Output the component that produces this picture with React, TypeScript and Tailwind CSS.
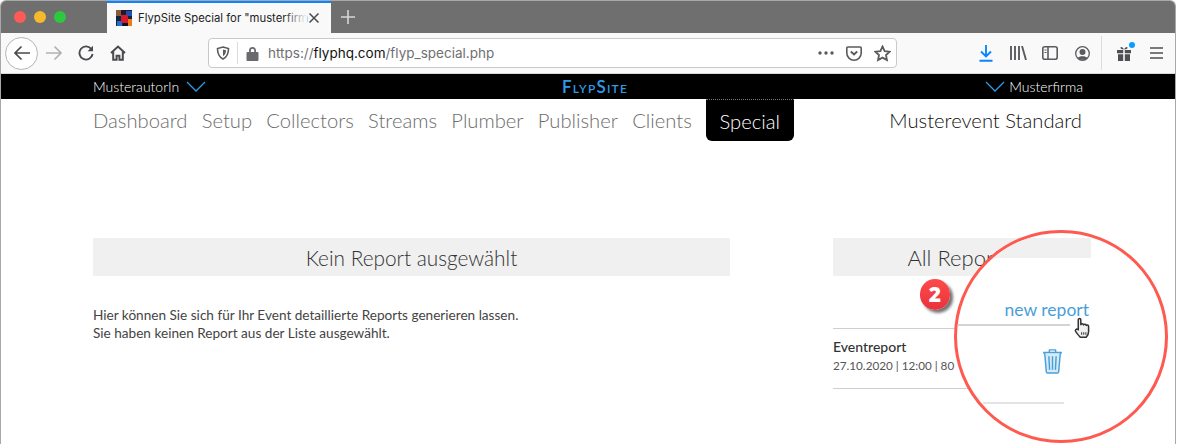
const lato = "font-['Lato','Open_Sans',sans-serif]";

function Favicon() {
  return (
    <svg width="16" height="16" viewBox="0 0 16 16">
      <rect width="16" height="16" fill="#12233f" />
      <rect x="0" y="0" width="5" height="6" fill="#8a5a3a" />
      <rect x="5" y="0" width="5" height="4" fill="#1a1a2a" />
      <rect x="10" y="1" width="6" height="5" fill="#1f4fb0" />
      <rect x="1" y="11" width="5" height="5" fill="#1d6fd0" />
      <rect x="5" y="5" width="7" height="8" fill="#d8182c" />
      <rect x="12" y="9" width="4" height="7" fill="#ee7a1a" />
      <rect x="7" y="13" width="5" height="3" fill="#0c1020" />
    </svg>
  );
}

function IconSlot({ children, w = 32 }: { children: React.ReactNode; w?: number }) {
  return (
    <div className="flex shrink-0 items-center justify-center" style={{ width: w }}>
      {children}
    </div>
  );
}

function Chevron() {
  return (
    <svg width="20" height="11" viewBox="0 0 20 11" fill="none" stroke="#2f9be8" strokeWidth="1.3">
      <path d="M1 1l9 9 9-9" />
    </svg>
  );
}

function TabBar() {
  return (
    <div className="flex h-[32px] bg-[#6f6f6f]">
      <div className="flex w-[106px] items-center gap-[8px] pl-[13px]">
        <span className="h-[12px] w-[12px] rounded-full bg-[#fc5b57]" />
        <span className="h-[12px] w-[12px] rounded-full bg-[#f6b92b]" />
        <span className="h-[12px] w-[12px] rounded-full bg-[#2ec840]" />
      </div>
      <div className="relative flex w-[224px] items-center border-t-2 border-[#0a84ff] bg-[#f9f9fa] pl-[9px]">
        <Favicon />
        <span className="ml-[6px] w-[168px] whitespace-nowrap font-['Inter',sans-serif] text-[11.3px] text-[#222]">
          FlypSite Special for "musterfirm
        </span>
        <div className="absolute left-[176px] top-0 h-full w-[24px] bg-gradient-to-r from-transparent to-[#f9f9fa]" />
        <svg className="ml-[2px]" width="12" height="12" viewBox="0 0 12 12" stroke="#4a4a4f" strokeWidth="1.5">
          <path d="M1.500 1.500l9 9M10.500 1.500l-9 9" />
        </svg>
      </div>
      <div className="ml-[10px] flex items-center">
        <svg width="14" height="14" viewBox="0 0 14 14" stroke="#d6d6d6" strokeWidth="1.6">
          <path d="M7 0v14M0 7h14" />
        </svg>
      </div>
    </div>
  );
}

function Toolbar() {
  return (
    <div className="flex h-[41px] items-center border-b border-[#d8d8d8] bg-[#f9f9fa]">
      <div className="ml-[4px] flex h-[33px] w-[33px] items-center justify-center rounded-full border border-[#b4b4b4] bg-white">
        <svg width="18" height="16" viewBox="0 0 18 16" fill="none" stroke="#4a4a4f" strokeWidth="1.7">
          <path d="M17 8H2M8.500 1.500L2 8l6.500 6.500" />
        </svg>
      </div>
      <IconSlot>
        <svg width="18" height="16" viewBox="0 0 18 16" fill="none" stroke="#b1b1b3" strokeWidth="1.7">
          <path d="M1 8h15M9.500 1.500L16 8l-6.500 6.500" />
        </svg>
      </IconSlot>
      <IconSlot>
        <svg width="16" height="16" viewBox="0 0 16 16" fill="none" stroke="#4a4a4f" strokeWidth="1.9">
          <path d="M13.500 4.200A6.600 6.600 0 1 0 14.600 9" />
          <path d="M15 0.800v5.400H9.600" fill="#4a4a4f" stroke="none" />
        </svg>
      </IconSlot>
      <IconSlot>
        <svg width="16" height="16" viewBox="0 0 16 16" fill="none" stroke="#4a4a4f" strokeWidth="2">
          <path d="M1 8l7-6.500L15 8M3.200 6.500v8.200h3.400v-4h2.800v4h3.400V6.500" />
        </svg>
      </IconSlot>
      <div className="ml-[74px] flex h-[30px] w-[689px] items-center rounded-[4px] border border-[#c9c9c9] bg-white pl-[7px]">
        <svg width="14" height="14" viewBox="0 0 14 14" fill="none" stroke="#5b5b5f" strokeWidth="1.6">
          <path d="M7 1l5.500 1.500c0 5-1.500 8.500-5.500 10.500C3 11 1.500 7.500 1.500 2.500z" />
          <path d="M7 3.500l3 .8c0 2.600-.9 4.600-3 5.900z" fill="#5b5b5f" stroke="none" />
        </svg>
        <div className="ml-[7px] h-[22px] w-px bg-[#dcdcdc]" />
        <svg className="ml-[8px]" width="13" height="15" viewBox="0 0 13 15">
          <path d="M3 6V4.500a3.500 3.500 0 0 1 7 0V6h1.500a1 1 0 0 1 1 1v7a1 1 0 0 1-1 1h-10a1 1 0 0 1-1-1V7a1 1 0 0 1 1-1zm1.800 0h3.400V4.500a1.700 1.700 0 0 0-3.400 0z" fill="#6b6b6f" />
        </svg>
        <span className="ml-[9px] whitespace-nowrap font-['Inter',sans-serif] text-[13.5px] text-[#6f6f73]">
          https://<span className="text-[#111]">flyphq.com</span>/flyp_special.php
        </span>
        <div className="ml-auto flex items-center">
          <IconSlot w={28}>
            <svg width="16" height="4" viewBox="0 0 16 4" fill="#5b5b5f">
              <circle cx="2" cy="2" r="1.700" />
              <circle cx="8" cy="2" r="1.700" />
              <circle cx="14" cy="2" r="1.700" />
            </svg>
          </IconSlot>
          <IconSlot w={28}>
            <svg width="16" height="15" viewBox="0 0 16 15" fill="none" stroke="#5b5b5f" strokeWidth="1.6">
              <path d="M1.800 1h12.400a1 1 0 0 1 1 1v5a7.200 7.200 0 0 1-14.400 0V2a1 1 0 0 1 1-1z" />
              <path d="M4.800 5.500L8 8.500l3.200-3" strokeWidth="1.900" />
            </svg>
          </IconSlot>
          <IconSlot w={28}>
            <svg width="17" height="17" viewBox="0 0 16 16" fill="none" stroke="#5b5b5f" strokeWidth="1.700">
              <path d="M8 1.400l2 4.300 4.700.6-3.400 3.200.9 4.700L8 11.900 3.800 14.200l.9-4.700-3.400-3.200 4.700-.6z" />
            </svg>
          </IconSlot>
        </div>
      </div>
      <div className="ml-[73px] flex items-center">
        <IconSlot>
          <svg width="14" height="17" viewBox="0 0 14 17" fill="none" stroke="#0a84ff" strokeWidth="1.900">
            <path d="M7 0v11M2 6.500L7 11.500l5-5M0.500 15.800h13" />
          </svg>
        </IconSlot>
        <IconSlot>
          <svg width="17" height="14" viewBox="0 0 17 14" fill="none" stroke="#5b5b5f" strokeWidth="1.900">
            <path d="M1 0v14M5 0v14M9 0v14M12 0l4 14" />
          </svg>
        </IconSlot>
        <IconSlot>
          <svg width="16" height="14" viewBox="0 0 16 14" fill="none" stroke="#5b5b5f" strokeWidth="1.600">
            <rect x="0.800" y="0.800" width="14.400" height="12.400" rx="2" />
            <path d="M6 1v12" />
            <path d="M2.500 4h2M2.500 6.500h2" strokeWidth="1.200" />
          </svg>
        </IconSlot>
        <IconSlot>
          <svg width="15" height="15" viewBox="0 0 15 15" fill="none" stroke="#5b5b5f" strokeWidth="1.300">
            <circle cx="7.500" cy="7.500" r="6.800" />
            <circle cx="7.500" cy="6" r="3" fill="#5b5b5f" stroke="none" />
            <path d="M2.800 12c1-2.400 8.400-2.400 9.400 0-2 2.400-7.400 2.400-9.400 0z" fill="#5b5b5f" stroke="none" />
          </svg>
        </IconSlot>
        <div className="ml-[3px] h-[34px] w-px bg-[#dcdcdc]" />
        <div className="ml-[6px]">
          <IconSlot>
            <div className="relative">
              <svg width="14" height="15" viewBox="0 0 14 15" fill="#4f4f53">
                <path d="M0 4h6.200v3.200H0zM7.800 4H14v3.200H7.800zM1 8.200h5.200V15H1zM7.800 8.200H13V15H7.800zM7 3.500C5.500 1 4 0.500 3.500 1.500S5 3.500 7 3.500zM7 3.500c1.500-2.500 3-3 3.500-2S9 3.500 7 3.500z" />
              </svg>
              <span className="absolute -right-[4px] -top-[4px] h-[6px] w-[6px] rounded-full bg-[#0a9dff]" />
            </div>
          </IconSlot>
        </div>
        <IconSlot>
          <svg width="13" height="12" viewBox="0 0 13 12" stroke="#4f4f53" strokeWidth="1.600">
            <path d="M0 1h13M0 6h13M0 11h13" />
          </svg>
        </IconSlot>
      </div>
    </div>
  );
}

function SiteHeader() {
  return (
    <div className="grid h-[25px] grid-cols-3 items-center bg-black pl-[92px] pr-[92px] text-[14px] font-light text-white">
      <div className="flex items-center gap-[7px]">
        <span>MusterautorIn</span>
        <Chevron />
      </div>
      <div className="pl-[14px] text-center text-[17px] font-semibold leading-none tracking-[1.2px] text-[#2f9be8] [font-variant:small-caps]">
        FlypSite
      </div>
      <div className="flex items-center justify-end gap-[4px]">
        <Chevron />
        <span>Musterfirma</span>
      </div>
    </div>
  );
}

const navItems = ['Dashboard', 'Setup', 'Collectors', 'Streams', 'Plumber', 'Publisher', 'Clients'];

function Nav() {
  return (
    <div className="flex h-[42px] items-stretch pl-[92px] pr-[93px] text-[20.2px] font-light">
      <div className="flex items-center gap-[14.3px] pt-[1px] text-[#6c6c6c]">
        {navItems.map(item => (
          <span key={item}>{item}</span>
        ))}
      </div>
      <div className="ml-[14px] flex w-[88px] items-center justify-center rounded-b-[6px] border-t border-dotted border-[#777] bg-black pt-[1px] text-white">
        Special
      </div>
      <div className="ml-auto flex items-center pt-[1px] text-[#111]">Musterevent Standard</div>
    </div>
  );
}

function Hand() {
  return (
    <svg width="21" height="22" viewBox="0 0 24 26" stroke="#333" strokeWidth="1.800" fill="#f0f0f0" strokeLinejoin="round">
      <path d="M7 15V3.200c0-2 3-2 3 0V9c.6-1.400 3-1.200 3.200.4.7-1.300 3-1 3.200.6.8-1 2.800-.6 2.800 1.200V17c0 3-1.400 5.500-2.800 7H9.500c-1.600-1.400-3.200-3.600-5.400-6.600-1.500-2.200.8-4 2.900-2.400z" />
      <path d="M11 18v3M13.500 18v3M16 18v3" strokeWidth="1.200" />
    </svg>
  );
}

function Trash() {
  return (
    <svg width="21" height="26" viewBox="0 0 20 25" fill="none" stroke="#4a9fd8" strokeWidth="1.400" strokeLinejoin="round">
      <path d="M1 4.500h18" strokeWidth="2" />
      <path d="M7 4V1.800h6V4" />
      <path d="M2.500 5l1.600 18.200a1 1 0 0 0 1 .8h9.800a1 1 0 0 0 1-.8L17.500 5" fill="#d6ebf8" />
      <path d="M6.500 8l.7 13M10 8v13M13.500 8l-.7 13" />
    </svg>
  );
}

function Callout() {
  return (
    <div className="absolute left-[953px] top-[229px] h-[213px] w-[214px] overflow-hidden rounded-full border-[3.5px] border-[#ff5a50] bg-white">
      <div className="absolute left-0 top-[4.5px] h-[20px] w-[133.5px] bg-[#f0f0f0]" />
      <span className="absolute right-[76px] top-[65px] whitespace-nowrap text-[17.5px] leading-[24px] text-[#4a9fd8]">
        new report
      </span>
      <div className="absolute left-0 top-[91px] h-[2px] w-[113px] bg-[#d4d4d4]" />
      <div className="absolute left-[114.5px] top-[83.5px]">
        <Hand />
      </div>
      <div className="absolute left-[84.5px] top-[114.5px]">
        <Trash />
      </div>
      <div className="absolute left-[26px] top-[169px] h-[2px] w-[81px] bg-[#e4e4e4]" />
    </div>
  );
}

function Badge() {
  return (
    <div className="absolute left-[919px] top-[278px] flex h-[31px] w-[30px] items-center justify-center rounded-full bg-gradient-to-b from-[#ff4a4a] to-[#e8323c] text-[21px] font-black leading-none text-white shadow-[3px_3px_3px_rgba(0,0,0,0.55)] font-['Open_Sans',sans-serif]">
      2
    </div>
  );
}

export default function App() {
  return (
    <div className={`relative h-[444px] w-[1176px] overflow-hidden rounded-t-[6px] border-x border-t border-[#a8a8a8] bg-white ${lato}`}>
      <TabBar />
      <Toolbar />
      <SiteHeader />
      <Nav />
      <div className="mt-[97px] flex pl-[92px]">
        <div className="w-[637px]">
          <div className="flex h-[38px] items-center justify-center bg-[#f0f0f0] pt-[1px] text-[20.8px] font-light text-[#333]">
            Kein Report ausgewählt
          </div>
          <p className="mt-[30px] text-[13.6px] leading-[18px] text-[#444]">
            Hier können Sie sich für Ihr Event detaillierte Reports generieren lassen.
            <br />
            Sie haben keinen Report aus der Liste ausgewählt.
          </p>
        </div>
        <div className="ml-[103px] w-[258px]">
          <div className="flex h-[38px] items-center justify-center bg-[#f0f0f0] pr-[6px] pt-[1px] text-[22px] font-light text-[#333]">
            All Reports
          </div>
          <div className="mt-[52px] h-[61px] w-[200px] border-y border-[#cfcfcf] pt-[9px]">
            <div className="text-[14px] font-medium leading-[18px] text-[#333]">Eventreport</div>
            <div className="text-[11.7px] leading-[18px] text-[#555]">27.10.2020 | 12:00 | 80</div>
          </div>
        </div>
      </div>
      <Badge />
      <Callout />
    </div>
  );
}
